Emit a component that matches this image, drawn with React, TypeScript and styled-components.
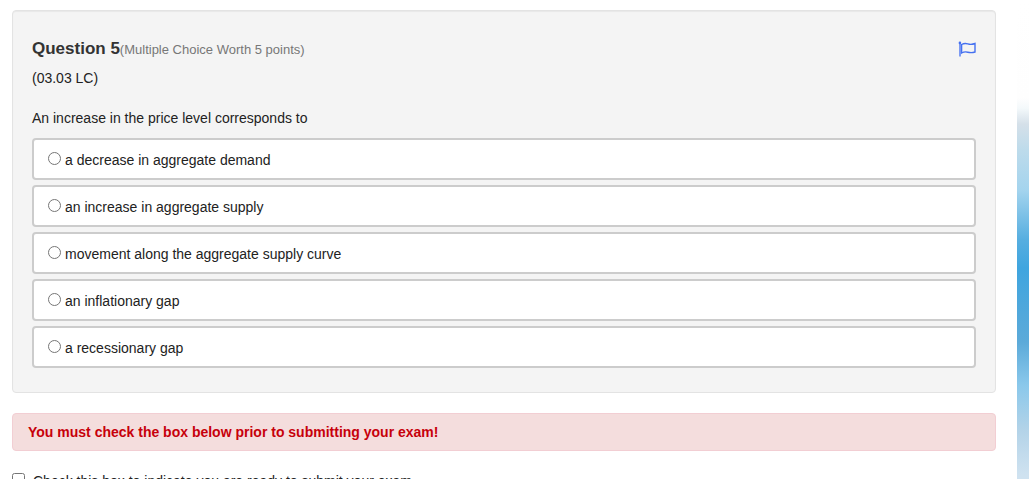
import React from "react";
import styled, { createGlobalStyle } from "styled-components";

const GlobalStyle = createGlobalStyle`
  *, *::before, *::after { box-sizing: border-box; }
  body {
    margin: 0;
    background: #fff;
    color: #222;
    font: 14px/20px "Liberation Sans", Arial, sans-serif;
  }
`;

const Page = styled.div`
  display: grid;
  grid-template-columns: minmax(0, 1fr) 12px;
  column-gap: 21px;
  height: 100vh;
  overflow: hidden;
  padding-left: 12px;
`;

const Backdrop = styled.div`
  background: linear-gradient(
    to bottom,
    #fff 0,
    #fefefe 98px,
    #f4f9fb 108px,
    #d5e0e9 124px,
    #bddbeb 150px,
    #a4d4ee 190px,
    #56aee0 240px,
    #3fa5df 268px,
    #5caad9 342px,
    #8ac8eb 385px,
    #b3d3e8 430px,
    #cfe2f0 475px
  );
`;

const Content = styled.main`
  display: flex;
  flex-direction: column;
  gap: 20px;
  padding-top: 10px;
`;

const Panel = styled.form`
  flex: none;
  padding: 26px 19px 24px;
  background: #f4f4f4;
  border: 1px solid #e3e3e3;
  border-radius: 4px;
  box-shadow: inset 0 1px 1px rgba(0, 0, 0, 0.05);
`;

const Header = styled.header`
  display: flex;
  align-items: center;
  justify-content: space-between;
  height: 24px;
`;

const Title = styled.h2`
  margin: 0;
  color: #333;
  font-size: 17px;
  line-height: 24px;
`;

const Worth = styled.small`
  color: #777;
  font-size: 13px;
  font-weight: 400;
`;

const FlagButton = styled.button`
  display: flex;
  padding: 0;
  border: 0;
  background: none;
  color: #4470f0;
  cursor: pointer;
`;

const Text = styled.p`
  margin: 0;
  padding-top: 7px;
`;

const Options = styled.fieldset`
  display: grid;
  gap: 5px;
  min-width: 0;
  margin: 0;
  padding: 0;
  border: 0;
`;

const Prompt = styled.legend`
  padding: 20px 0 10px;
`;

const Option = styled.label`
  display: flex;
  align-items: flex-start;
  gap: 4px;
  padding: 10px 14px 8px;
  background: #fff;
  border: 2px solid #ccc;
  border-radius: 4px;
`;

const Radio = styled.input`
  width: 13px;
  height: 13px;
  margin: 2px 0 0;
`;

const Alert = styled.div`
  flex: none;
  padding: 8px 15px;
  background: #f4dddd;
  border: 1px solid #f2ced3;
  border-radius: 4px;
  color: #c7000b;
  font-weight: 700;
`;

const Confirm = styled.label`
  display: flex;
  align-items: flex-start;
  gap: 8px;
`;

const Checkbox = styled.input`
  width: 13px;
  height: 13px;
  margin: 2px 0 0;
`;

const answers = [
  "a decrease in aggregate demand",
  "an increase in aggregate supply",
  "movement along the aggregate supply curve",
  "an inflationary gap",
  "a recessionary gap",
];

function FlagIcon() {
  return (
    <svg width="18" height="16" viewBox="0 0 18 16" fill="none" stroke="currentColor" aria-hidden="true">
      <path d="M2 1.500v14" strokeWidth="1.8" opacity=".75" />
      <circle cx="1.900" cy="1.900" r="1.300" fill="currentColor" stroke="none" />
      <path
        d="M3.600 3.500C5.800 2.300 7.600 2.200 9.800 2.900s4.500.7 7.200-.4v8.500c-2.700.9-5 .8-7.200.2s-4-.4-6.200.8z"
        strokeWidth="1.400"
      />
    </svg>
  );
}

export default function App() {
  return (
    <>
      <GlobalStyle />
      <Page>
        <Content>
          <Panel>
            <Header>
              <Title>
                Question 5<Worth>(Multiple Choice Worth 5 points)</Worth>
              </Title>
              <FlagButton type="button" aria-label="Flag question">
                <FlagIcon />
              </FlagButton>
            </Header>
            <Text>(03.03 LC)</Text>
            <Options>
              <Prompt>An increase in the price level corresponds to</Prompt>
              {answers.map((answer) => (
                <Option key={answer}>
                  <Radio type="radio" name="answer" value={answer} />
                  {answer}
                </Option>
              ))}
            </Options>
          </Panel>
          <Alert role="alert">You must check the box below prior to submitting your exam!</Alert>
          <Confirm>
            <Checkbox type="checkbox" name="ready" />
            Check this box to indicate you are ready to submit your exam.
          </Confirm>
        </Content>
        <Backdrop />
      </Page>
    </>
  );
}
